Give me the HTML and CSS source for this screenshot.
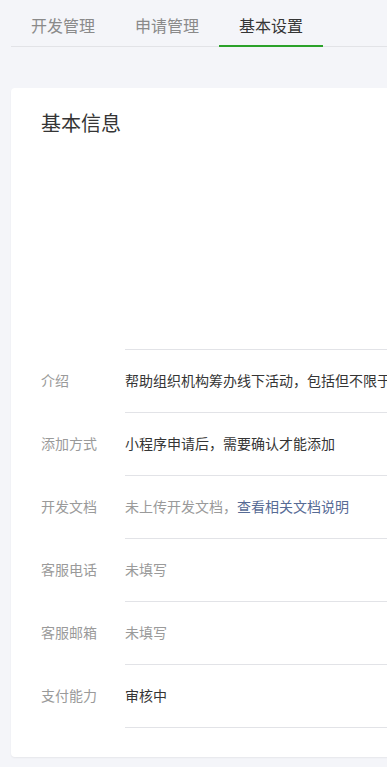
FILE: index.html
```html
<!DOCTYPE html>
<html lang="zh-CN">
<head>
    <meta charset="UTF-8">
    <meta name="viewport" content="width=device-width, initial-scale=1.0">
    <title>基本设置</title>
    <link rel="stylesheet" href="styles.css">
</head>
<body>
    <div class="tabs">
        <a class="tab">开发管理</a>
        <a class="tab">申请管理</a>
        <a class="tab active">基本设置</a>
    </div>

    <div class="card">
        <div class="card-head">
            <h3>基本信息</h3>
        </div>
        <div class="info-list">
            <div class="info-row">
                <div class="label">介绍</div>
                <div class="value">帮助组织机构筹办线下活动，包括但不限于报名、签到等</div>
            </div>
            <div class="info-row">
                <div class="label">添加方式</div>
                <div class="value">小程序申请后，需要确认才能添加</div>
            </div>
            <div class="info-row">
                <div class="label">开发文档</div>
                <div class="value muted">未上传开发文档，<a class="link">查看相关文档说明</a></div>
            </div>
            <div class="info-row">
                <div class="label">客服电话</div>
                <div class="value muted">未填写</div>
            </div>
            <div class="info-row">
                <div class="label">客服邮箱</div>
                <div class="value muted">未填写</div>
            </div>
            <div class="info-row">
                <div class="label">支付能力</div>
                <div class="value">审核中</div>
            </div>
        </div>
    </div>
</body>
</html>
```

FILE: styles.css
```css
body{
    margin:0;
    background-color:#f4f5f9;
    font-family:"Noto Sans CJK SC","Noto Sans",sans-serif;
    color:#353535;
    overflow-x:hidden;
}
.tabs{
    display:flex;
    margin-left:11px;
    border-bottom:1px solid #e2e3e7;
}
.tab{
    width:104px;
    text-align:center;
    font-size:16px;
    line-height:24px;
    padding:13px 0 8px;
    color:#8a8a8a;
    border-bottom:2px solid transparent;
    margin-bottom:-1px;
    white-space:nowrap;
}
.tab.active{
    color:#353535;
    border-bottom-color:#2ba22a;
}
.card{
    margin:41px -60px 10px 11px;
    background-color:#fff;
    border-radius:4px;
    box-shadow:0 1px 2px rgba(0,0,0,0.06);
    padding:21px 30px 29px;
}
.card-head{
    height:240px;
}
.card-head h3{
    margin:0;
    font-size:20px;
    font-weight:normal;
    line-height:28px;
    color:#353535;
}
.info-row{
    display:flex;
    font-size:14px;
}
.label{
    width:84px;
    flex-shrink:0;
    color:#9a9a9a;
    line-height:22px;
    padding:19px 0 21px;
}
.value{
    flex:1;
    line-height:22px;
    padding:19px 0 21px;
    border-bottom:1px solid #e2e3e7;
    white-space:nowrap;
    overflow:hidden;
}
.info-row:first-child .value{
    border-top:1px solid #e2e3e7;
}
.info-row:first-child .label{
    padding-top:20px;
}
.muted{
    color:#9a9a9a;
}
.link{
    color:#576b95;
    text-decoration:none;
}
```
